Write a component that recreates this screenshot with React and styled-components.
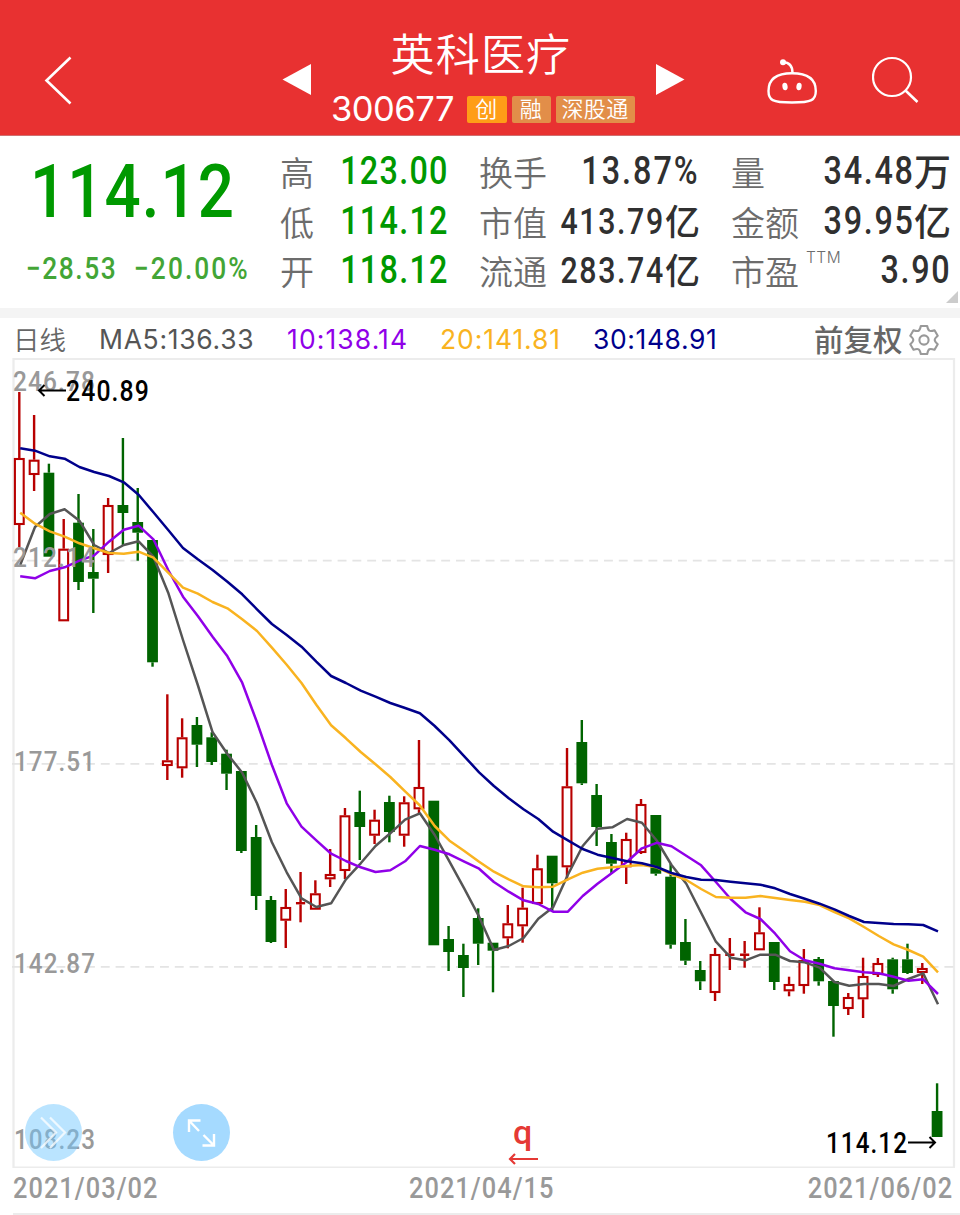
import React from "react";
import styled, { createGlobalStyle } from "styled-components";

const CJK = '"Noto Sans CJK SC", sans-serif';
const DIGITS = 'Roboto, "Noto Sans CJK SC", sans-serif';
const UI = 'Inter, "Noto Sans CJK SC", sans-serif';

const GlobalStyle = createGlobalStyle`
  * { box-sizing: border-box; }
  body { margin: 0; background: #fff; font-family: ${CJK}; }
  button { border: 0; padding: 0; background: none; display: block; }
`;

const Page = styled.div`
  width: 960px;
  height: 1215px;
  overflow: hidden;
  background: #fff;
  display: flex;
  flex-direction: column;
`;

/* ---------- header ---------- */

const Header = styled.header`
  height: 136px;
  flex: none;
  background: #e83131;
  border-bottom: 1px solid #cf6f70;
  display: grid;
  grid-template-columns: 282px 49px 304px 131px 194px;
  color: #fff;
`;

const BackButton = styled.button`
  margin: 56px 0 0 44px;
  width: 30px;
  height: 50px;
`;

const StepButton = styled.button`
  margin: 63px 0 0 ${(p) => p.$inset || 0}px;
  width: 30px;
  height: 33px;
`;

const Title = styled.div`
  display: flex;
  flex-direction: column;
`;

const StockName = styled.h1`
  margin: 28px 0 0 59.5px;
  font: 350 44px/48px ${CJK};
  letter-spacing: 1.2px;
  white-space: nowrap;
`;

const CodeRow = styled.div`
  margin-top: 20px;
  display: flex;
  align-items: center;
  height: 27px;
`;

const Code = styled.span`
  flex: none;
  width: 135.5px;
  font: 400 34.5px/27px ${UI};
  letter-spacing: -0.5px;
  margin-top: -2px;
`;

const Badge = styled.span`
  flex: none;
  width: ${(p) => p.$width}px;
  height: 27px;
  margin-right: 5px;
  border-radius: 2px;
  background: ${(p) => (p.$bright ? "#ff9d17" : "#e28e49")};
  font: 350 22px/23px ${CJK};
  letter-spacing: 0.4px;
  text-align: center;
`;

const Actions = styled.div`
  display: flex;
  gap: 54px;
  padding-top: 55px;
`;

/* ---------- quote ---------- */

const Quote = styled.section`
  position: relative;
  height: 172px;
  flex: none;
  display: grid;
  grid-template-columns: 281px 168px 251px 251px;
  padding-top: 11px;
`;

const Figure = styled.span`
  display: inline-block;
  font-family: ${DIGITS};
  font-weight: ${(p) => p.$weight || 500};
  font-size: ${(p) => p.$size}px;
  letter-spacing: ${(p) => p.$track || 0}px;
  transform: scaleX(${(p) => p.$squeeze});
  transform-origin: ${(p) => p.$origin || "right"} center;
  white-space: nowrap;
`;

const Price = styled.div`
  color: #009900;
  height: 90px;
  line-height: 90px;
  padding-left: 30px;
`;

const Changes = styled.div`
  display: grid;
  grid-template-columns: 108px 1fr;
  margin: 12px 0 0 26px;
  line-height: 40px;
  color: #43a536;
`;

const StatColumn = styled.dl`
  margin: 0;
  padding-left: ${(p) => p.$inset}px;
`;

const Stat = styled.div`
  display: flex;
  justify-content: space-between;
  height: 49.5px;
  line-height: 49.5px;
`;

const Label = styled.dt`
  font: 350 34px/50.5px ${CJK};
  color: #6c6c6c;
  white-space: nowrap;
  display: flex;
  margin-left: -1px;
`;

const Sup = styled.sup`
  font: 300 15.5px/20px ${UI};
  letter-spacing: 0.5px;
  margin: 2px 0 0 7px;
`;

const Value = styled.dd`
  margin: 0;
  width: 0;
  display: flex;
  justify-content: flex-end;
  color: ${(p) => (p.$down ? "#009900" : "#303030")};
`;

const Unit = styled.span`
  font: 500 ${(p) => p.$size}px/46px ${CJK};
`;

const Corner = styled.i`
  position: absolute;
  right: 2px;
  bottom: 5px;
  border-left: 12px solid transparent;
  border-bottom: 12px solid #ccc;
`;

const Gap = styled.div`
  height: 10px;
  flex: none;
  background: #f4f4f4;
`;

/* ---------- moving averages ---------- */

const Averages = styled.div`
  height: 40px;
  flex: none;
  display: grid;
  grid-template-columns: 86px 188px 153px 153px 221px 94px 32px;
  padding-left: 13px;
  align-items: center;
`;

const Period = styled.span`
  font: 350 26.5px/38px ${CJK};
  color: #666;
`;

const Average = styled.span`
  font: 400 26.5px/42px ${UI};
  letter-spacing: ${(p) => p.$track}px;
  color: ${(p) => p.$color};
`;

const Adjust = styled.span`
  font: 500 29.5px/38px ${CJK};
  margin-top: -3px;
  color: #666;
`;

/* ---------- chart ---------- */

const ChartArea = styled.div`
  position: relative;
  height: 810px;
  flex: none;
`;

const RoundButton = styled.button`
  position: absolute;
  left: ${(p) => p.$left}px;
  top: 746px;
  width: 57px;
  height: 57px;
  border-radius: 50%;
  background: ${(p) => p.$fill};
`;

const Dates = styled.footer`
  flex: none;
  height: 47px;
  margin-left: 13px;
  padding-right: 7px;
  border-bottom: 2px solid #ececec;
  display: grid;
  grid-template-columns: 396px 1fr auto;
  line-height: 41px;
  color: #999;
`;

// [high, bodyTop, bodyBottom, low, rising]
const CANDLES = [
  [392, 458, 525, 547, 1], [415, 459.7, 475, 491, 1], [463.7, 472.7, 556.7, 556.7, 0],
  [519, 548.7, 621.3, 621.3, 1], [494, 522.7, 582, 590, 0], [529, 572, 578.7, 613, 0],
  [498, 505, 555, 573, 1], [438, 505, 513, 545, 0], [488, 522, 532.7, 560.7, 0],
  [540, 540, 662.3, 666.7, 0], [694.3, 760.3, 766, 780, 1], [718.3, 737.3, 768.3, 777.7, 1],
  [717, 725, 744.7, 767, 0], [732.3, 737.3, 762, 765, 0], [749.7, 753.7, 773.7, 790, 0],
  [771, 771, 851, 853, 0], [825, 837, 896, 910, 0], [896, 900, 942, 943, 0],
  [889, 907, 920.7, 948, 1], [872, 902, 904.4, 922.3, 1], [880.3, 893.3, 909.7, 909.7, 1],
  [849, 874, 879.3, 887, 1], [808, 815.3, 871, 879, 1], [790.7, 812, 827, 860, 0],
  [809.7, 819.7, 835.7, 844, 1], [795.7, 802, 832, 842.3, 0], [796.3, 802.3, 835.7, 846.7, 1],
  [740, 787, 809.3, 813, 1], [800.7, 800.7, 945.3, 945.3, 0], [926, 939, 952, 971, 0],
  [943.7, 955, 968, 997, 0], [908.3, 918, 943.7, 965, 0], [942.7, 942.7, 950.7, 992.3, 0],
  [905, 923.3, 938.3, 948.3, 1], [887.7, 907.7, 926.3, 942.7, 1], [854.7, 868.3, 904, 904, 1],
  [855.7, 855.7, 883.3, 912, 0], [748, 786.3, 867.3, 880.7, 1], [720, 742, 783.3, 785, 0],
  [784, 795, 827, 846, 0], [834, 842, 863.7, 873.3, 0], [832.7, 839, 867.3, 884, 1],
  [799, 804, 853, 854, 1], [815, 815, 873.7, 875.7, 0], [864, 876.7, 944.7, 948.7, 0],
  [919, 942, 960.7, 965, 0], [961, 970, 981.3, 990, 0], [948, 954, 993, 1001, 1],
  [938, 953.5, 956, 970, 1], [941, 953.5, 956, 967.7, 1], [907.3, 932.3, 950.3, 950.3, 1],
  [942, 942, 982, 990, 0], [976.7, 984, 991.3, 996.3, 1], [949, 960, 986, 993.7, 1],
  [957, 959, 981.3, 985.7, 0], [981, 981, 1006, 1036.7, 0], [993, 997, 1009, 1015, 1],
  [957.7, 976, 999.3, 1018, 1], [958, 963, 975, 977, 1], [957.7, 959.3, 989.3, 993.7, 0],
  [943.7, 959.3, 973, 974, 0], [963, 968, 973, 984, 1], [1083.3, 1111, 1137, 1137, 0],
];

const LINES = [
  {
    color: "#555555",
    ys: [565, 527, 514, 509.3, 520.7, 545, 553, 545, 541.3, 556.7, 592.7, 640, 685, 732.3, 754, 772.7, 803.3, 842.3, 872.3, 898.3, 907, 903.3, 879.3, 863.3, 846, 833.3, 819.7, 813.3, 835, 861.7, 888.7, 916.7, 950, 946, 938, 918.7, 907.3, 874.7, 846, 828.7, 827.3, 819, 822.7, 840.5, 865, 883.7, 912.7, 941.7, 957.7, 960.3, 954.7, 954.7, 961, 962.3, 967.7, 982, 985.7, 984, 984, 986, 979, 973.3, 1004.3],
  },
  {
    color: "#9000e8",
    ys: [576.3, 578.3, 571, 567.3, 560.7, 555.3, 541.7, 529.7, 525.7, 539.3, 570, 596.7, 616, 636.7, 656.3, 682.7, 722.3, 765, 803.3, 826.7, 840.3, 853.7, 861, 867.3, 872, 870.3, 861.3, 846, 849.7, 854.3, 861.7, 868.7, 882, 891.7, 900.3, 904, 911.7, 911.7, 896, 883.7, 872.7, 861.7, 848.3, 842.8, 846.3, 855.7, 865.3, 882, 899, 912.3, 919, 933.7, 951.3, 960.3, 963.7, 968.3, 970.3, 972.3, 973.3, 976.7, 980.7, 979.3, 994],
  },
  {
    color: "#f9b320",
    ys: [512.7, 523.7, 531.3, 536.7, 543.3, 548.3, 553, 553.7, 551.7, 557.7, 572.7, 587.7, 593.7, 602, 608.3, 619.3, 631, 647.7, 664.7, 683, 704.7, 725.3, 738.3, 752, 764.3, 777, 791.3, 805.5, 826, 840.7, 851, 861.7, 871.7, 879.3, 886.3, 887.3, 886.7, 879.3, 872.7, 868.7, 867.3, 866, 865, 867.3, 874, 880, 889, 897, 897.7, 897.7, 896, 898, 900, 901.7, 905, 912, 918.3, 927, 936, 944.3, 950, 956.7, 972.3],
  },
  {
    color: "#00008b",
    ys: [448.3, 450.7, 456.3, 458.7, 467, 472, 476, 482.3, 494.7, 512.3, 530, 548, 559.3, 570, 581.7, 594.3, 609.3, 624, 635, 646.7, 661.7, 676, 683, 690.7, 696.7, 703, 708, 713.3, 726, 740.3, 756.3, 772.3, 786, 798.3, 809.3, 819, 831.7, 840.3, 849, 854.7, 858, 861.3, 863.3, 867, 873, 877, 879.7, 880, 881.7, 883.3, 884.7, 888.3, 894, 898.7, 903.7, 909.3, 916, 922, 923, 924, 924.3, 925, 931.3],
  },
];

const AXIS = [
  ["246.78", 13, 391], ["212.14", 13, 567], ["177.51", 14, 770.5],
  ["142.87", 14, 973], ["108.23", 14, 1149],
];

const STEP = 14.803;
const UP = "#b80000";
const DOWN = "#006400";

const ChartText = styled.text`
  font: ${(p) => p.$weight || 500} ${(p) => p.$size || 28.5}px ${DIGITS};
  letter-spacing: ${(p) => (p.$track === undefined ? 1.3 : p.$track)}px;
`;

function Candle({ index, data }) {
  const [high, top, bottom, low, rising] = data;
  const x = 19.3 + index * STEP;
  const color = rising ? UP : DOWN;
  const flat = bottom - top < 3;
  return (
    <g>
      <rect x={x - 1.2} y={high} width="2.4" height={top - high} fill={color} />
      <rect x={x - 1.2} y={bottom} width="2.4" height={low - bottom} fill={color} />
      {rising && !flat ? (
        <rect x={x - 4.4} y={top + 1} width="8.8" height={bottom - top - 2} fill="#fff" stroke={color} strokeWidth="2.1" />
      ) : (
        <rect x={x - (flat ? 4.6 : 5.4)} y={top} width={flat ? 9.2 : 10.8} height={bottom - top} fill={color} />
      )}
    </g>
  );
}

function Chart() {
  return (
    <svg width="960" height="810" viewBox="0 358 960 810" style={{ display: "block" }}>
      <path d="M12.5 359H954V1167M13.5 358V1168M12.5 1167.5H955" fill="none" stroke="#ececec" strokeWidth="2.2" />
      {[560.7, 763.8, 966.8].map((y) => (
        <path key={y} d={`M12 ${y}H954`} stroke="#e4e4e4" strokeWidth="1.8" strokeDasharray="8.9 5.9" />
      ))}
      {CANDLES.map((c, i) => (
        <Candle key={i} index={i} data={c} />
      ))}
      {LINES.map((l) => (
        <polyline
          key={l.color}
          points={l.ys.map((y, i) => `${(20.2 + i * STEP).toFixed(1)},${y}`).join(" ")}
          fill="none"
          stroke={l.color}
          strokeWidth="2.5"
          strokeLinejoin="round"
        />
      ))}
      {AXIS.map(([t, x, y]) => (
        <ChartText key={t} x={x} y={y} fill="#999" textLength={96 - x} lengthAdjust="spacingAndGlyphs">
          {t}
        </ChartText>
      ))}
      <path d="M66 390.500H39M44.500 385L39 390.500L44.500 396" fill="none" stroke="#000" strokeWidth="2" />
      <ChartText x="66" y="401" fill="#000" $size={29} textLength="84" lengthAdjust="spacingAndGlyphs">
        240.89
      </ChartText>
      <ChartText x="826" y="1153" fill="#000" $size={29} textLength="82" lengthAdjust="spacingAndGlyphs">
        114.12
      </ChartText>
      <path d="M908 1142.500H935M929.500 1137L935 1142.500L929.500 1148" fill="none" stroke="#000" strokeWidth="2" />
      <ChartText x="513" y="1144" fill="#e53935" $size={34} $track={0}>
        q
      </ChartText>
      <path d="M538 1159H510M515 1154L510 1159L515 1164" fill="none" stroke="#e53935" strokeWidth="2.2" />
    </svg>
  );
}

const GEAR = (() => {
  const turn = (x, y, k) => {
    const a = (k * Math.PI) / 3;
    const rx = x * Math.cos(a) - y * Math.sin(a);
    const ry = x * Math.sin(a) + y * Math.cos(a);
    return `${rx.toFixed(2)} ${ry.toFixed(2)}`;
  };
  const teeth = [0, 1, 2, 3, 4, 5].map(
    (k) => `${k ? "L" : "M"}${turn(-3.2, -14, k)}L${turn(3.2, -14, k)}C${turn(4.2, -8.8, k)} ${turn(5.5, -8.05, k)} ${turn(-3.2, -14, k + 1)}`
  );
  return `${teeth.join("")}Z`;
})();

function Stock({ label, sup, value, unit, size = 39, squeeze = 0.83, track = 2, unitSize = 35, down }) {
  return (
    <Stat>
      <Label>
        {label}
        {sup && <Sup>{sup}</Sup>}
      </Label>
      <Value $down={down}>
        <Figure $size={size} $squeeze={squeeze} $track={track}>{value}</Figure>
        {unit && <Unit $size={unitSize}>{unit}</Unit>}
      </Value>
    </Stat>
  );
}

export default function App() {
  return (
    <Page>
      <GlobalStyle />
      <Header>
        <BackButton>
          <svg width="30" height="50" viewBox="0 0 30 50" fill="none" stroke="#fff" strokeWidth="2.6">
            <path d="M26.500 1.500L2.500 24.500L26.500 47.500" />
          </svg>
        </BackButton>
        <StepButton>
          <svg width="30" height="33" fill="#fff"><path d="M0.500 16.500L29 1V32Z" /></svg>
        </StepButton>
        <Title>
          <StockName>英科医疗</StockName>
          <CodeRow>
            <Code>300677</Code>
            <Badge $width={40} $bright>创</Badge>
            <Badge $width={39}>融</Badge>
            <Badge $width={79}>深股通</Badge>
          </CodeRow>
        </Title>
        <StepButton $inset={20}>
          <svg width="30" height="33" fill="#fff"><path d="M29.500 16.500L1 1V32Z" /></svg>
        </StepButton>
        <Actions>
          <svg width="52" height="50" viewBox="0 0 52 50" fill="none" stroke="#fff" strokeWidth="2.400">
            <path d="M26 18.300C38 18.300 49.800 22 49.800 36C49.800 45 46 47.500 26 47.500S2.500 45 2.500 36C2.500 22 14 18.300 26 18.300Z" />
            <path d="M17 7.300C24 7.300 26.500 11 26.500 18" />
            <circle cx="17" cy="7.300" r="3" fill="#fff" stroke="none" />
            <ellipse cx="19" cy="31.500" rx="2.600" ry="3.700" fill="#fff" stroke="none" transform="rotate(-10 19 31.500)" />
            <ellipse cx="33" cy="31.500" rx="2.600" ry="3.700" fill="#fff" stroke="none" transform="rotate(10 33 31.500)" />
          </svg>
          <svg width="50" height="50" viewBox="0 0 50 50" fill="none" stroke="#fff" strokeWidth="2.200">
            <circle cx="20" cy="22" r="19" />
            <path d="M33.500 35.500L45.500 47" strokeWidth="2.600" />
          </svg>
        </Actions>
      </Header>

      <Quote>
        <div>
          <Price>
            <Figure $size={74.5} $squeeze={0.855} $track={1.2} $origin="left">114.12</Figure>
          </Price>
          <Changes>
            <Figure $size={31} $squeeze={0.85} $track={1.8} $origin="left">−28.53</Figure>
            <Figure $size={31} $squeeze={0.85} $track={2.4} $origin="left">−20.00%</Figure>
          </Changes>
        </div>
        <StatColumn $inset={0}>
          <Stock label="高" value="123.00" track={1.5} down />
          <Stock label="低" value="114.12" track={1.5} down />
          <Stock label="开" value="118.12" track={1.5} down />
        </StatColumn>
        <StatColumn $inset={31}>
          <Stock label="换手" value="13.87%" track={2.4} />
          <Stock label="市值" value="413.79" unit="亿" size={36.5} />
          <Stock label="流通" value="283.74" unit="亿" size={36.5} />
        </StatColumn>
        <StatColumn $inset={32}>
          <Stock label="量" value="34.48" unit="万" unitSize={37} />
          <Stock label="金额" value="39.95" unit="亿" unitSize={37} />
          <Stock label="市盈" sup="TTM" value="3.90" />
        </StatColumn>
        <Corner />
      </Quote>
      <Gap />

      <Averages>
        <Period>日线</Period>
        <Average $color="#555" $track={0.7}>MA5:136.33</Average>
        <Average $color="#9000e8" $track={1.1}>10:138.14</Average>
        <Average $color="#f9b320" $track={0.9}>20:141.81</Average>
        <Average $color="#00008b" $track={0.6}>30:148.91</Average>
        <Adjust>前复权</Adjust>
        <svg width="32" height="32" viewBox="-16 -17 32 32" fill="none" stroke="#999" strokeWidth="2.1" strokeLinejoin="round">
          <path d={GEAR} />
          <circle cx="0" cy="0" r="4.600" />
        </svg>
      </Averages>

      <ChartArea>
        <Chart />
        <RoundButton $left={25} $fill="rgba(110, 198, 255, 0.48)">
          <svg width="57" height="57" fill="none" stroke="#fff" strokeOpacity="0.75" strokeWidth="2.200">
            <path d="M16 13.500L31 28.500L16 44M25 13.500L40 28.500L25 44" />
          </svg>
        </RoundButton>
        <RoundButton $left={173} $fill="#a5daff">
          <svg width="57" height="57" fill="none" stroke="#fff" strokeWidth="2.400">
            <path d="M26 27L16 16.500M16 28V16.500H27.500M30.500 31L41 41.500M41 30V41.500H29.500" />
          </svg>
        </RoundButton>
      </ChartArea>

      <Dates>
        <Figure $size={29.5} $squeeze={0.86} $track={1.2} $origin="left">2021/03/02</Figure>
        <Figure $size={29.5} $squeeze={0.86} $track={1.2} $origin="left">2021/04/15</Figure>
        <Figure $size={29.5} $squeeze={0.86} $track={1.2}>2021/06/02</Figure>
      </Dates>
    </Page>
  );
}
